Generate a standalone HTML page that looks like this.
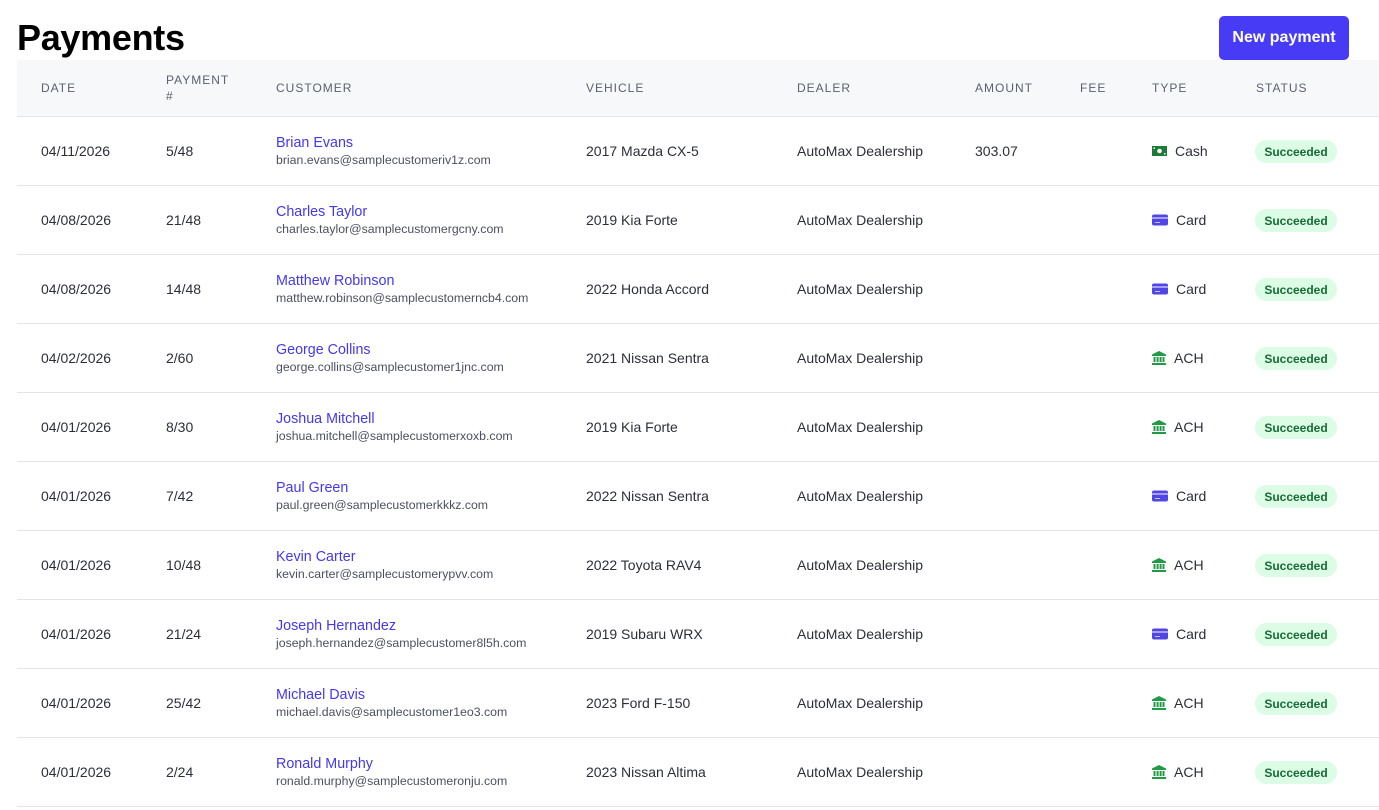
<!DOCTYPE html>
<html><head><meta charset="utf-8"><style>
*{margin:0;padding:0;box-sizing:border-box}
body{width:1379px;height:810px;overflow:hidden;background:#fff;font-family:"Liberation Sans",sans-serif;color:#1f2937;position:relative}
h1{position:absolute;left:17px;top:17px;font-size:36px;font-weight:700;color:#000;letter-spacing:-0.3px}
.btn{position:absolute;left:1219px;top:16px;width:130px;height:44px;background:#473bf5;border-radius:5px;color:#fff;font-size:16px;font-weight:700;display:flex;align-items:center;justify-content:center}
.hdr{position:absolute;left:17px;top:60px;width:1362px;height:57px;background:#f7f8fa;border-bottom:1px solid #e3e5ea}
.h{position:absolute;font-size:12px;color:#5b6170;letter-spacing:1px;top:21px}
.row{position:absolute;left:17px;width:1362px;height:69px;border-bottom:1px solid #e2e4e8}
.c{position:absolute;font-size:14px;color:#2b2f38;top:26px}
.nm{position:absolute;left:259px;top:18px;font-size:14.3px;color:#4338f0}
.em{position:absolute;left:259px;top:36px;font-size:12.3px;color:#4b5060}
.ty{position:absolute;left:1135px;top:26px;font-size:14px;color:#2b2f38;display:flex;align-items:center;gap:8px}
.ty svg{display:block}
.b{position:absolute;left:1238px;top:23px;width:82px;height:23px;border-radius:12px;background:#dcfce6;color:#176b35;font-size:12px;font-weight:700;display:flex;align-items:center;justify-content:center}
</style></head><body>
<h1>Payments</h1>
<div class="btn">New payment</div>
<div class="hdr">
<div class="h" style="left:24px">DATE</div>
<div class="h" style="left:149px;top:12px;line-height:16px">PAYMENT<br>#</div>
<div class="h" style="left:259px">CUSTOMER</div>
<div class="h" style="left:569px">VEHICLE</div>
<div class="h" style="left:780px">DEALER</div>
<div class="h" style="left:958px">AMOUNT</div>
<div class="h" style="left:1063px">FEE</div>
<div class="h" style="left:1135px">TYPE</div>
<div class="h" style="left:1239px">STATUS</div>
</div>
<div id="rows"></div>
<script>
const cash='<svg width="15" height="12" viewBox="0 0 15 12"><rect x="0" y="1" width="15" height="10" fill="#1f7a3a"/><circle cx="7.5" cy="6" r="2.3" fill="#fff"/><rect x="1.5" y="2.5" width="1.5" height="1.5" fill="#fff"/><rect x="12" y="8" width="1.5" height="1.5" fill="#fff"/></svg>';
const card='<svg width="16" height="12" viewBox="0 0 16 12"><rect x="0" y="0.5" width="16" height="11" rx="2" fill="#4f46e5"/><rect x="0" y="3" width="16" height="2" fill="#a5a0f5"/><rect x="3" y="8" width="5" height="1" fill="#c7c4fa"/></svg>';
const ach='<svg width="14" height="14" viewBox="0 0 14 14"><path d="M7 0L0 3.5V5H14V3.5Z" fill="#1f9a45"/><rect x="1.5" y="6" width="2" height="5" fill="#1f9a45"/><rect x="4.6" y="6" width="2" height="5" fill="#1f9a45"/><rect x="7.6" y="6" width="2" height="5" fill="#1f9a45"/><rect x="10.5" y="6" width="2" height="5" fill="#1f9a45"/><rect x="0" y="12" width="14" height="2" fill="#1f9a45"/></svg>';
const d=[
["04/11/2026","5/48","Brian Evans","brian.evans@samplecustomeriv1z.com","2017 Mazda CX-5","303.07","Cash"],
["04/08/2026","21/48","Charles Taylor","charles.taylor@samplecustomergcny.com","2019 Kia Forte","","Card"],
["04/08/2026","14/48","Matthew Robinson","matthew.robinson@samplecustomerncb4.com","2022 Honda Accord","","Card"],
["04/02/2026","2/60","George Collins","george.collins@samplecustomer1jnc.com","2021 Nissan Sentra","","ACH"],
["04/01/2026","8/30","Joshua Mitchell","joshua.mitchell@samplecustomerxoxb.com","2019 Kia Forte","","ACH"],
["04/01/2026","7/42","Paul Green","paul.green@samplecustomerkkkz.com","2022 Nissan Sentra","","Card"],
["04/01/2026","10/48","Kevin Carter","kevin.carter@samplecustomerypvv.com","2022 Toyota RAV4","","ACH"],
["04/01/2026","21/24","Joseph Hernandez","joseph.hernandez@samplecustomer8l5h.com","2019 Subaru WRX","","Card"],
["04/01/2026","25/42","Michael Davis","michael.davis@samplecustomer1eo3.com","2023 Ford F-150","","ACH"],
["04/01/2026","2/24","Ronald Murphy","ronald.murphy@samplecustomeronju.com","2023 Nissan Altima","","ACH"]];
let h='';
d.forEach((r,i)=>{const ic=r[6]=='Cash'?cash:r[6]=='Card'?card:ach;
h+=`<div class="row" style="top:${117+i*69}px"><div class="c" style="left:24px">${r[0]}</div><div class="c" style="left:149px">${r[1]}</div><div class="nm">${r[2]}</div><div class="em">${r[3]}</div><div class="c" style="left:569px">${r[4]}</div><div class="c" style="left:780px">AutoMax Dealership</div><div class="c" style="left:958px">${r[5]}</div><div class="ty">${ic}<span>${r[6]}</span></div><div class="b">Succeeded</div></div>`;});
document.getElementById('rows').innerHTML=h;
</script>
</body></html>
